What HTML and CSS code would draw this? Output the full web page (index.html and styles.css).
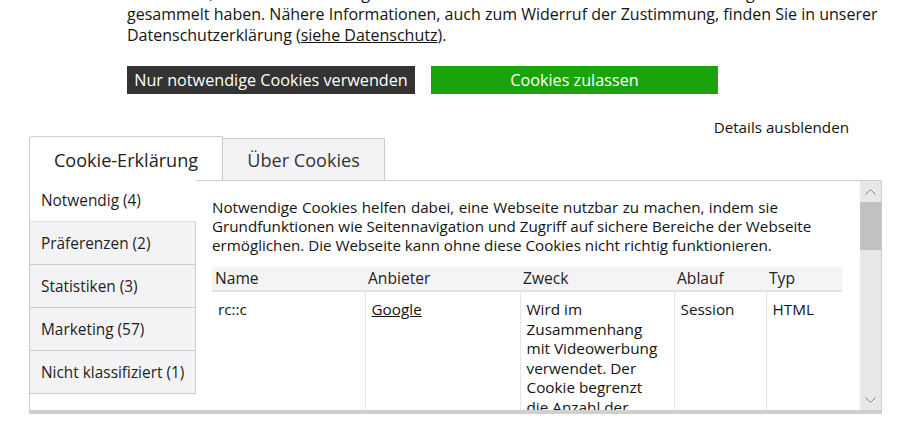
FILE: index.html
```html
<!DOCTYPE html>
<html lang="de">
<head>
<meta charset="utf-8">
<title>Cookie-Erklärung</title>
<link rel="stylesheet" href="styles.css">
</head>
<body>
<div class="page">
  <p class="intro">zusammen, die Sie ihnen bereitgestellt haben oder die sie im Rahmen Ihrer Nutzung der Dienste<br>gesammelt haben. Nähere Informationen, auch zum Widerruf der Zustimmung, finden Sie in unserer<br>Datenschutzerklärung (<a class="ul" href="#">siehe Datenschutz</a>).</p>
  <div class="buttons">
    <button class="btn btn-dark">Nur notwendige Cookies verwenden</button>
    <button class="btn btn-green">Cookies zulassen</button>
  </div>
  <div class="details-row"><a class="details" href="#">Details ausblenden</a></div>
  <div class="tabs">
    <div class="tab tab-active">Cookie-Erklärung</div>
    <div class="tab tab-inactive">Über Cookies</div>
  </div>
  <div class="panel">
    <nav class="side">
      <div class="side-item side-active">Notwendig (4)</div>
      <div class="side-item">Präferenzen (2)</div>
      <div class="side-item">Statistiken (3)</div>
      <div class="side-item">Marketing (57)</div>
      <div class="side-item">Nicht klassifiziert (1)</div>
    </nav>
    <div class="content">
      <div class="scroll">
        <p class="desc"><span class="l1">Notwendige Cookies helfen dabei, eine Webseite nutzbar zu machen, indem sie</span><br>Grundfunktionen wie Seitennavigation und Zugriff auf sichere Bereiche der Webseite<br>ermöglichen. Die Webseite kann ohne diese Cookies nicht richtig funktionieren.</p>
        <table class="ctable">
          <colgroup><col class="c1"><col class="c2"><col class="c3"><col class="c4"><col class="c5"></colgroup>
          <thead>
            <tr><th>Name</th><th>Anbieter</th><th>Zweck</th><th>Ablauf</th><th>Typ</th></tr>
          </thead>
          <tbody>
            <tr>
              <td>rc::c</td>
              <td><a class="ul" href="#">Google</a></td>
              <td>Wird im<br>Zusammenhang<br>mit Videowerbung<br>verwendet. Der<br>Cookie begrenzt<br>die Anzahl der<br>Male, die ein<br>Benutzer</td>
              <td>Session</td>
              <td>HTML</td>
            </tr>
          </tbody>
        </table>
      </div>
      <div class="scrollbar">
        <div class="sb-btn"><svg width="11" height="6" viewBox="0 0 11 6"><polyline points="0.5,5.5 5.5,0.5 10.5,5.5" fill="none" stroke="#858585" stroke-width="1"/></svg></div>
        <div class="sb-thumb"></div>
        <div class="sb-track"></div>
        <div class="sb-btn"><svg width="11" height="6" viewBox="0 0 11 6"><polyline points="0.5,0.5 5.5,5.5 10.5,0.5" fill="none" stroke="#858585" stroke-width="1"/></svg></div>
      </div>
    </div>
  </div>
</div>
</body>
</html>
```
FILE: styles.css
```css
html, body {
  margin: 0;
  padding: 0;
  background: #ffffff;
}
body {
  font-family: "Open Sans", "Noto Sans", sans-serif;
  color: #141414;
  overflow: hidden;
  width: 902px;
  height: 423px;
}
.page {
  width: 902px;
  overflow: hidden;
}
.intro {
  margin: -17px 0 0 0;
  padding-left: 127px;
  font-size: 16px;
  line-height: 21px;
  white-space: nowrap;
}
.ul {
  color: #141414;
  text-decoration: underline;
}
.buttons {
  display: flex;
  gap: 16px;
  margin-top: 20px;
  padding-left: 127px;
}
.btn {
  border: 0;
  margin: 0;
  height: 28px;
  padding: 0;
  font-family: "Open Sans", "Noto Sans", sans-serif;
  font-size: 16.2px;
  color: #ffffff;
  text-align: center;
}
.btn-dark {
  width: 288px;
  background: #333333;
}
.btn-green {
  width: 287px;
  background: #1ba30b;
}
.details-row {
  height: 42px;
  box-sizing: border-box;
  padding: 23px 53px 0 0;
  text-align: right;
  line-height: 20px;
}
.details {
  font-size: 15.2px;
  color: #141414;
  text-decoration: none;
}
.tabs {
  display: flex;
  align-items: flex-end;
  margin-left: 29px;
  height: 44px;
}
.tab {
  box-sizing: border-box;
  display: flex;
  align-items: center;
  justify-content: center;
  font-size: 18.1px;
  color: #222;
}
.tab-active {
  width: 194px;
  height: 44px;
  background: #fff;
  border: 1px solid #cccccc;
  border-bottom: 0;
  border-top-left-radius: 4px;
  padding-top: 3px;
}
.tab-inactive {
  width: 162px;
  height: 42px;
  background: #f3f3f5;
  border-top: 1px solid #cccccc;
  border-right: 1px solid #cccccc;
  padding-top: 1px;
  color: #333;
}
.panel {
  display: flex;
  margin-left: 29px;
  width: 853px;
  height: 234px;
  box-sizing: border-box;
  border-left: 1px solid #cccccc;
  border-bottom: 4px solid #d0d0d0;
}
.side {
  width: 166px;
  flex: none;
  display: flex;
  flex-direction: column;
}
.side-item {
  box-sizing: border-box;
  height: 43px;
  padding-left: 11px;
  display: flex;
  align-items: center;
  font-size: 15.4px;
  background: #f3f3f5;
  border-bottom: 1px solid #cccccc;
  border-right: 1px solid #cccccc;
  color: #1e1e1e;
  white-space: nowrap;
}
.side-item.side-active {
  height: 42px;
  background: #ffffff;
  border-right: 0;
  border-bottom: 1px solid #e0e0e0;
  padding-bottom: 1px;
}
.content {
  flex: 1;
  display: flex;
  border-top: 1px solid #cccccc;
  border-right: 1px solid #cccccc;
  min-width: 0;
}
.scroll {
  flex: 1;
  overflow: hidden;
  padding: 17px 17px 0 16px;
}
.desc {
  margin: 0;
  font-size: 15.2px;
  line-height: 19px;
  white-space: nowrap;
}
.l1 {
  word-spacing: 0.5px;
}
.ctable {
  margin-top: 12px;
  width: 630px;
  border-collapse: collapse;
  table-layout: fixed;
  font-size: 15.3px;
}
.c1 { width: 153px; }
.c2 { width: 155px; }
.c3 { width: 154px; }
.c4 { width: 92px; }
.c5 { width: 76px; }
.ctable th {
  text-align: left;
  font-weight: normal;
  background: #f4f4f6;
  height: 23px;
  padding: 0 3px;
  line-height: 23px;
  border-bottom: 2px solid #e2e2e2;
  color: #222;
  font-size: 15.6px;
}
.ctable td {
  vertical-align: top;
  padding: 8px 6px 0 6px;
  line-height: 19.5px;
  border-left: 1px solid #e6e6e6;
}
.ctable td:first-child {
  border-left: 0;
}
.scrollbar {
  width: 21px;
  flex: none;
  background: #e8e8e8;
  display: flex;
  flex-direction: column;
}
.sb-btn {
  height: 21px;
  display: flex;
  align-items: center;
  justify-content: center;
  flex: none;
}
.sb-thumb {
  height: 48px;
  background: #c1c1c1;
  flex: none;
}
.sb-track {
  flex: 1;
}
```
